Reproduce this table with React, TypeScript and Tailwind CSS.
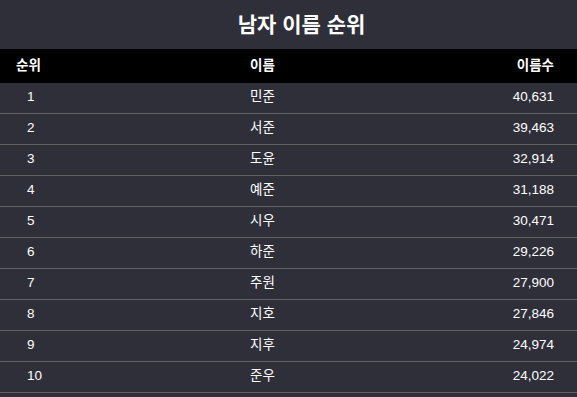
const rows = [
  { rank: 1, name: '민준', count: '40,631' },
  { rank: 2, name: '서준', count: '39,463' },
  { rank: 3, name: '도윤', count: '32,914' },
  { rank: 4, name: '예준', count: '31,188' },
  { rank: 5, name: '시우', count: '30,471' },
  { rank: 6, name: '하준', count: '29,226' },
  { rank: 7, name: '주원', count: '27,900' },
  { rank: 8, name: '지호', count: '27,846' },
  { rank: 9, name: '지후', count: '24,974' },
  { rank: 10, name: '준우', count: '24,022' },
]

function App() {
  return (
    <main className="min-h-screen w-full bg-[#2f2f3a] text-white [font-family:'Liberation_Sans','Noto_Sans_CJK_KR',sans-serif]">
      <h1 className="flex h-[49px] items-center justify-center pl-[26px] text-[21px] leading-none font-bold">남자 이름 순위</h1>
      <div className="grid h-[34px] grid-cols-[234px_1fr_auto] items-center bg-black pr-[23px] pl-[16px] text-[13.5px] leading-none font-bold">
        <div>순위</div>
        <div>이름</div>
        <div className="text-right">이름수</div>
      </div>
      {rows.map((row) => (
        <div
          key={row.rank}
          className="grid h-[31px] grid-cols-[223px_1fr_auto] items-center border-b border-[#626262] pr-[23px] pb-[2px] pl-[27px] text-[13.5px] leading-none"
        >
          <div>{row.rank}</div>
          <div>{row.name}</div>
          <div className="text-right">{row.count}</div>
        </div>
      ))}
    </main>
  )
}

export default App
